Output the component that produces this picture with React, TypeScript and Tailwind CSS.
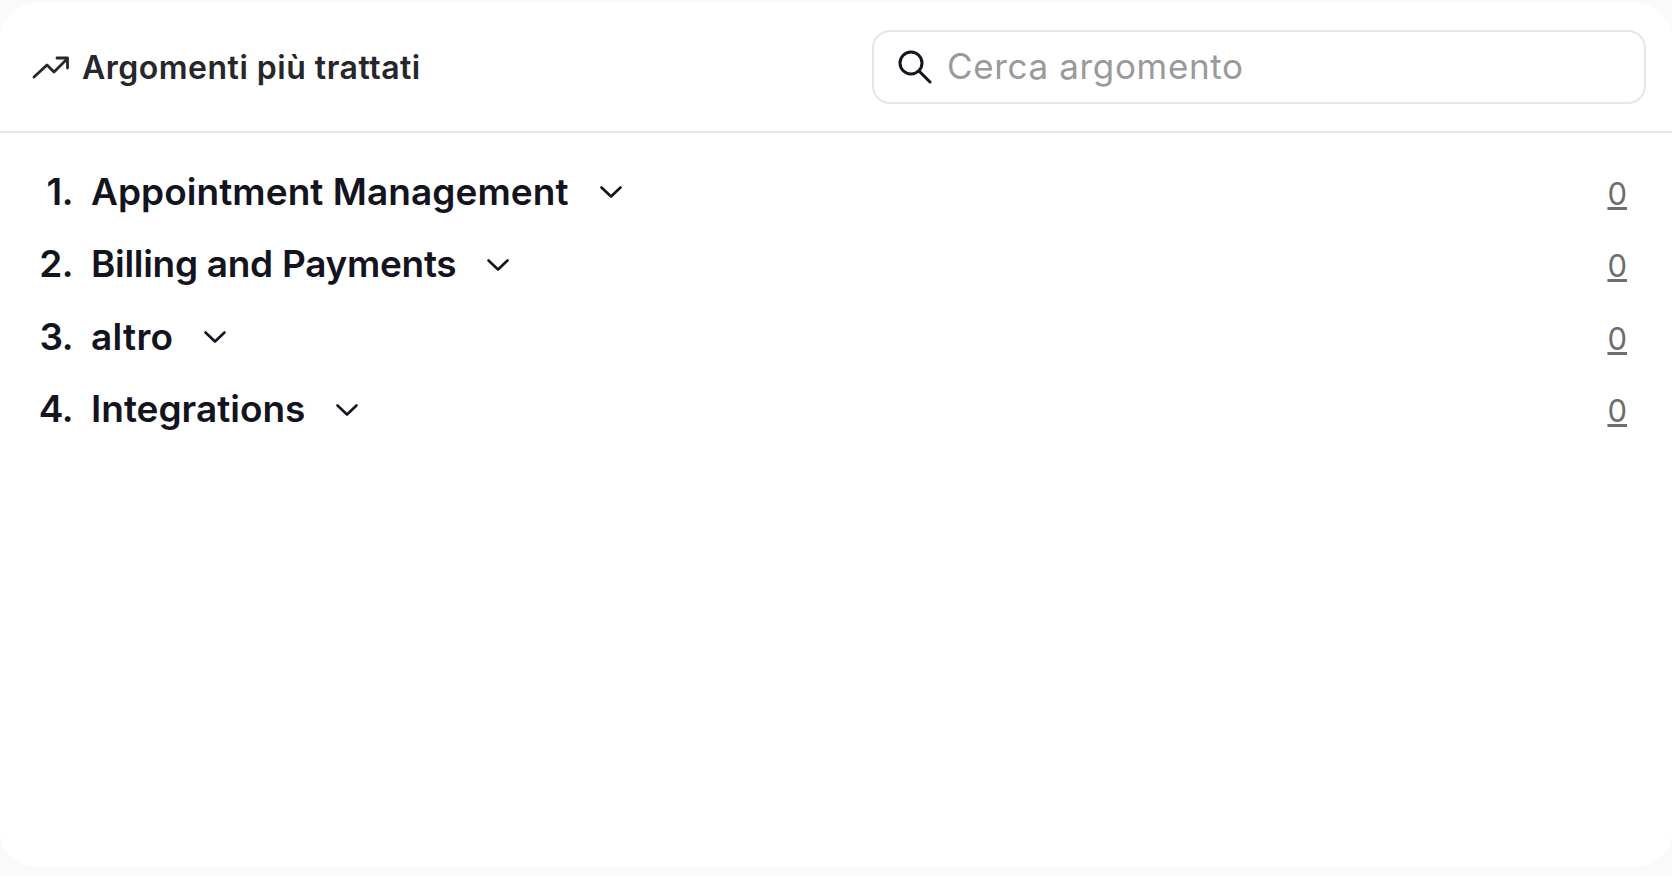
import React from "react";

const rows = [
  { n: "1.", t: "Appointment Management", c: "tracking-[0.05px]" },
  { n: "2.", t: "Billing and Payments", c: "tracking-[-0.3px]" },
  { n: "3.", t: "altro", c: "tracking-[0.3px]" },
  { n: "4.", t: "Integrations", c: "tracking-[0px]" },
];

function Chevron() {
  return (
    <svg width="24" height="14" viewBox="0 0 24 14" fill="none" stroke="#14141f" strokeWidth="2.6" strokeLinecap="round" strokeLinejoin="round" className="block shrink-0">
      <path d="M2.5 2.5 L12 11.5 L21.5 2.5" />
    </svg>
  );
}

export default function App() {
  return (
    <div className="w-[1672px] h-[876px] bg-[#fafafa] pt-[3px] overflow-hidden font-['Inter','Liberation_Sans',sans-serif]">
      <div className="h-[864px] bg-white rounded-[36px]">
        <header className="h-[130px] border-b-2 border-[#e6e6e6] flex items-center justify-between pl-[32px] pr-[26px]">
          <div className="flex items-center gap-[13px] text-[#26262b]">
            <svg width="37" height="24" viewBox="0 0 37 24" fill="none" stroke="currentColor" strokeWidth="2.8" strokeLinecap="round" strokeLinejoin="round">
              <path d="M2 22 L15 10 L22 17 L35 4" />
              <path d="M25 3 L35.5 3 L35.5 13" />
            </svg>
            <span className="pt-[2px] text-[32px] font-semibold leading-none tracking-[0.5px]">Argomenti più trattati</span>
          </div>
          <div className="w-[774px] h-[74px] rounded-[18px] border-2 border-[#e6e6e6] flex items-center pl-[24px] gap-[15px]">
            <svg width="34" height="34" viewBox="0 0 34 34" fill="none" stroke="#14141f" strokeWidth="3" strokeLinecap="round" className="shrink-0">
              <circle cx="13" cy="13" r="11" />
              <path d="M21 21 L32 32" />
            </svg>
            <span className="pb-[2px] text-[35px] leading-none text-[#9a9a9a] tracking-[0.65px]">Cerca argomento</span>
          </div>
        </header>
        <ul className="pt-[22px] pl-[33px] pr-[45px] flex flex-col">
          {rows.map((r) => (
            <li key={r.n} className="h-[72.5px] flex items-center justify-between text-[#14141f]">
              <div className="flex items-center">
                <span className="w-[40px] text-right text-[37px] font-semibold leading-none tracking-[-0.5px]">{r.n}</span>
                <span className={`ml-[18px] text-[37px] font-semibold leading-none ${r.c}`}>{r.t}</span>
                <span className="ml-[30px] pt-[2px]"><Chevron /></span>
              </div>
              <span className="pt-[4px] text-[31px] leading-none text-[#6e6e6e] underline">0</span>
            </li>
          ))}
        </ul>
      </div>
    </div>
  );
}
